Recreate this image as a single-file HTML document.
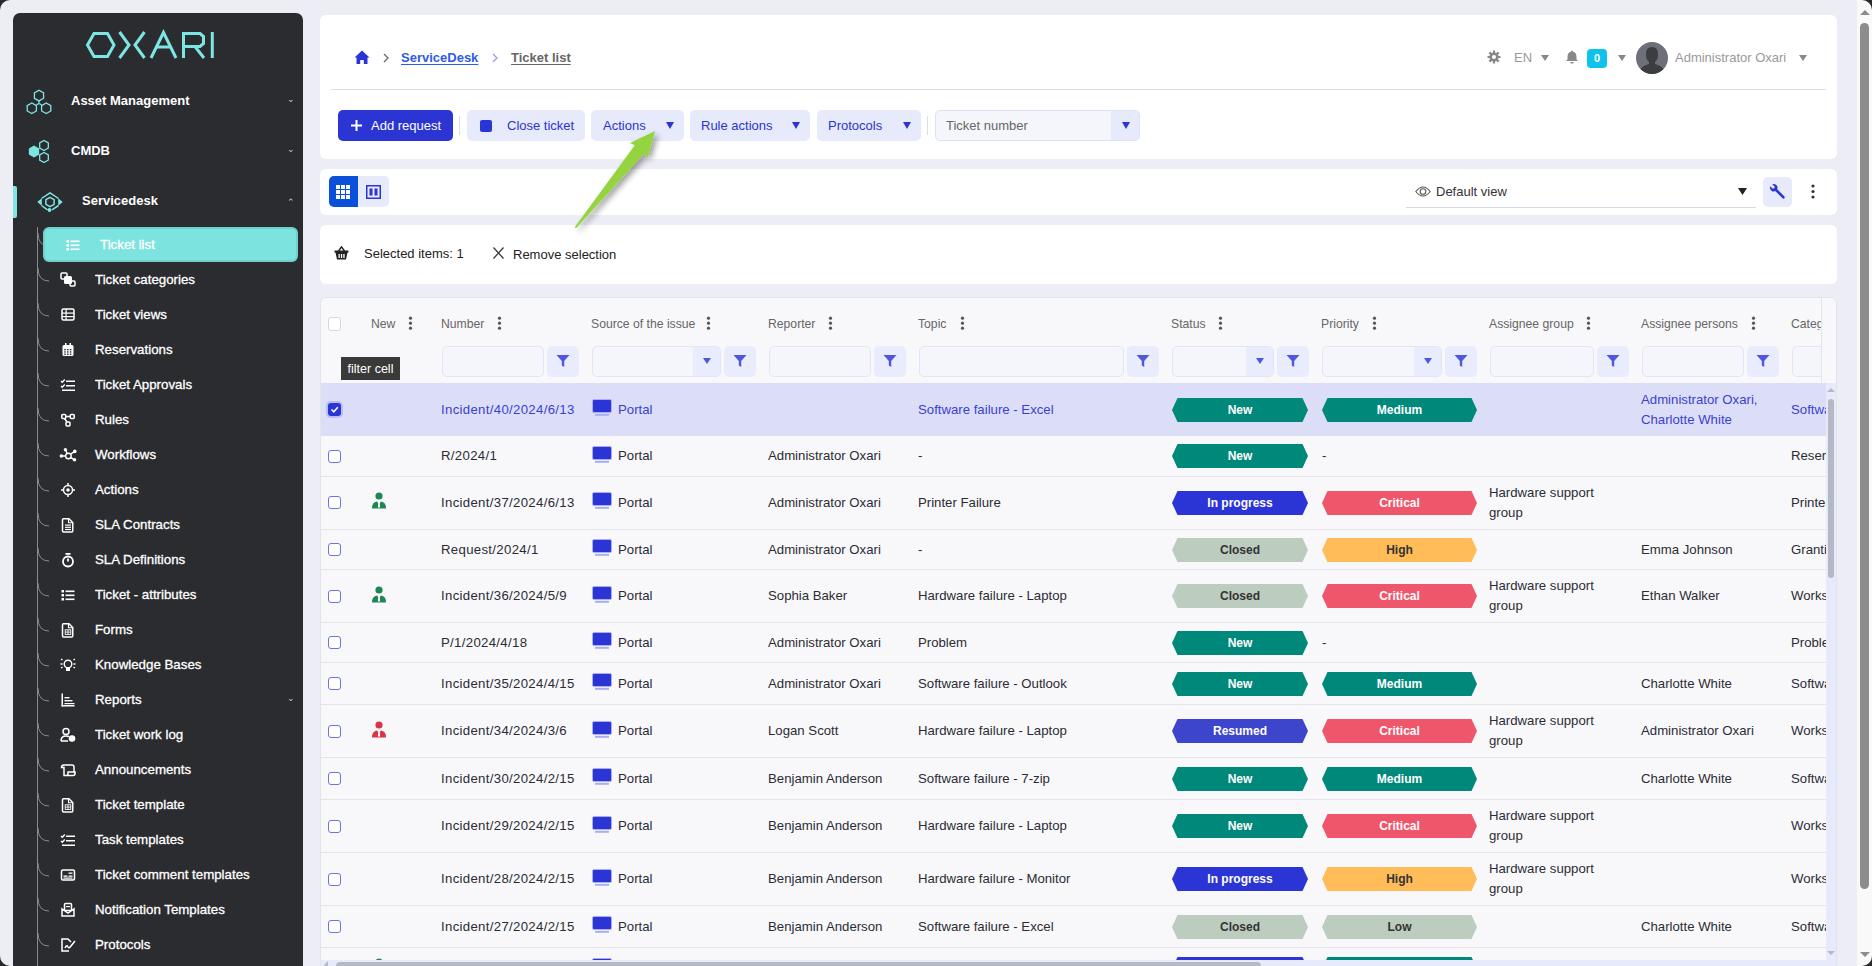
<!DOCTYPE html><html><head><meta charset="utf-8"><title>Ticket list</title><style>
*{box-sizing:border-box;margin:0;padding:0}
html,body{width:1872px;height:966px;overflow:hidden;background:#EDEDF5;font-family:"Liberation Sans",sans-serif;color:#333}
.abs{position:absolute}
.t{position:absolute;white-space:nowrap;line-height:1}
svg{display:block}
</style></head><body><div class="abs" style="left:13px;top:13px;width:290px;height:980px;background:#2B2C2F;border-radius:7px"></div><svg class="abs" style="left:80px;top:25px" width="140" height="40" viewBox="80 25 140 40">
<g fill="none" stroke="#7DE6E2" stroke-width="3" stroke-linejoin="miter">
<polygon points="94,33.5 107.5,33.5 114,45 107.5,56.5 94,56.5 87.5,45"/>
<polyline points="119.5,32 129,45 119.5,58"/>
<polyline points="144.5,32 135,45 144.5,58"/>
<polyline points="151,58 163.5,32.5 176,58"/>
<line x1="156" y1="47" x2="171" y2="47"/>
<polyline points="183.5,58 183.5,33.5 200,33.5 203.5,36.5 203.5,43.5 200,46.5 183.5,46.5"/>
<line x1="195" y1="46.5" x2="204" y2="58"/>
<line x1="212.3" y1="32" x2="212.3" y2="58"/>
</g></svg><svg class="abs" style="left:24px;top:86px" width="30" height="30" viewBox="24 86 30 30"><g fill="none" stroke="#7DE6E2" stroke-width="1.3">
<polygon points="43.59,98.25 39.00,100.90 34.41,98.25 34.41,92.95 39.00,90.30 43.59,92.95"/><polygon points="36.39,110.95 31.80,113.60 27.21,110.95 27.21,105.65 31.80,103.00 36.39,105.65"/><polygon points="50.79,110.95 46.20,113.60 41.61,110.95 41.61,105.65 46.20,103.00 50.79,105.65"/><path d="M39 101 V103.5 M36.4 104.8 L39 103.5 L41.6 104.8"/></g></svg><div class="t" style="left:71px;top:94px;font-size:13px;font-weight:bold;color:#fff">Asset Management</div><div class="t" style="left:287px;top:95px;font-size:9px;color:#ccc">&#8964;</div><svg class="abs" style="left:24px;top:136px" width="30" height="30" viewBox="24 136 30 30"><g fill="none" stroke="#7DE6E2" stroke-width="1.3">
<polygon points="38.50,154.10 34.00,156.70 29.50,154.10 29.50,148.90 34.00,146.30 38.50,148.90" fill="#7DE6E2"/><polygon points="48.33,148.00 44.00,150.50 39.67,148.00 39.67,143.00 44.00,140.50 48.33,143.00"/><polygon points="48.33,160.00 44.00,162.50 39.67,160.00 39.67,155.00 44.00,152.50 48.33,155.00"/></g></svg><div class="t" style="left:71px;top:144px;font-size:13px;font-weight:bold;color:#fff">CMDB</div><div class="t" style="left:287px;top:145px;font-size:9px;color:#ccc">&#8964;</div><div class="abs" style="left:13px;top:186px;width:4px;height:32px;background:#7DE6E2;border-radius:0 2px 2px 0"></div><svg class="abs" style="left:36px;top:189px" width="28" height="26" viewBox="36 189 28 26"><g fill="none" stroke="#7DE6E2" stroke-width="1.5" stroke-linejoin="round">
<polygon points="50,197.3 54.1,199.7 54.1,204.3 50,206.7 45.9,204.3 45.9,199.7"/>
<polyline points="41.5,198.5 50,192.8 58.5,198.5"/><polyline points="41.5,205.5 47.5,209.8"/><polyline points="52,209.8 58.5,205.5"/></g>
<polygon points="37.3,202 41.8,198.2 41.8,205.8" fill="#7DE6E2"/><polygon points="62.7,202 58.2,198.2 58.2,205.8" fill="#7DE6E2"/><circle cx="49.5" cy="210" r="1.9" fill="#7DE6E2"/></svg><div class="t" style="left:82px;top:194px;font-size:13px;font-weight:bold;color:#fff">Servicedesk</div><div class="t" style="left:287px;top:198px;font-size:9px;color:#ccc">&#8963;</div><div class="abs" style="left:37px;top:227px;width:1px;height:760px;background:#8A8B8E"></div><svg class="abs" style="left:0;top:0" width="303" height="966"><g fill="none" stroke="#8A8B8E" stroke-width="1"><path d="M38 233 Q38 246 49 246"/><path d="M38 268 Q38 281 49 281"/><path d="M38 303 Q38 316 49 316"/><path d="M38 338 Q38 351 49 351"/><path d="M38 373 Q38 386 49 386"/><path d="M38 408 Q38 421 49 421"/><path d="M38 443 Q38 456 49 456"/><path d="M38 478 Q38 491 49 491"/><path d="M38 513 Q38 526 49 526"/><path d="M38 548 Q38 561 49 561"/><path d="M38 583 Q38 596 49 596"/><path d="M38 618 Q38 631 49 631"/><path d="M38 653 Q38 666 49 666"/><path d="M38 688 Q38 701 49 701"/><path d="M38 723 Q38 736 49 736"/><path d="M38 758 Q38 771 49 771"/><path d="M38 793 Q38 806 49 806"/><path d="M38 828 Q38 841 49 841"/><path d="M38 863 Q38 876 49 876"/><path d="M38 898 Q38 911 49 911"/><path d="M38 933 Q38 946 49 946"/></g></svg><div class="abs" style="left:43px;top:227px;width:255px;height:35px;background:#7DE3DF;border:2px solid #6FD0CC;border-radius:6px"></div><svg class="abs" style="left:0;top:0" width="303" height="966"><g fill="#fff"><rect x="66.5" y="240" width="2.5" height="2.5"/><rect x="70.5" y="240.5" width="9" height="1.6"/><rect x="66.5" y="244" width="2.5" height="2.5"/><rect x="70.5" y="244.5" width="9" height="1.6"/><rect x="66.5" y="248" width="2.5" height="2.5"/><rect x="70.5" y="248.5" width="9" height="1.6"/><rect x="61" y="273" width="6" height="6" rx="1" fill="none" stroke="#fff" stroke-width="1.5"/><rect x="64" y="276" width="8" height="8" rx="1.5"/><rect x="70" y="281" width="5" height="5" rx="1" fill="none" stroke="#fff" stroke-width="1.5"/><rect x="62" y="309" width="12" height="11" rx="1.5" fill="none" stroke="#fff" stroke-width="1.5"/><rect x="62" y="312.5" width="12" height="1.2"/><rect x="62" y="316" width="12" height="1.2"/><rect x="65.5" y="309" width="1.2" height="11"/><rect x="62.5" y="345" width="11" height="11" rx="1.5"/><rect x="65" y="343" width="1.5" height="3"/><rect x="69.5" y="343" width="1.5" height="3"/><rect x="64.2" y="349.0" width="1.6" height="1.3" fill="#2B2C2F"/><rect x="64.2" y="351.3" width="1.6" height="1.3" fill="#2B2C2F"/><rect x="64.2" y="353.6" width="1.6" height="1.3" fill="#2B2C2F"/><rect x="67.0" y="349.0" width="1.6" height="1.3" fill="#2B2C2F"/><rect x="67.0" y="351.3" width="1.6" height="1.3" fill="#2B2C2F"/><rect x="67.0" y="353.6" width="1.6" height="1.3" fill="#2B2C2F"/><rect x="69.8" y="349.0" width="1.6" height="1.3" fill="#2B2C2F"/><rect x="69.8" y="351.3" width="1.6" height="1.3" fill="#2B2C2F"/><rect x="69.8" y="353.6" width="1.6" height="1.3" fill="#2B2C2F"/><path d="M61 381 l1.3 1.3 l2.5 -2.8" fill="none" stroke="#fff" stroke-width="1.3"/><path d="M61 386 l1.3 1.3 l2.5 -2.8" fill="none" stroke="#fff" stroke-width="1.3"/><rect x="66" y="380.5" width="9" height="1.5"/><rect x="66" y="385" width="9" height="1.5"/><rect x="62" y="389.5" width="13" height="1.5"/><g fill="none" stroke="#fff" stroke-width="1.5"><rect x="61.75" y="414.5" width="4" height="4" rx="1"/><rect x="70.25" y="414.5" width="4" height="4" rx="1"/><rect x="66" y="422" width="4" height="4" rx="1"/><path d="M65.75 416.5 h4.5 M64.5 418.5 l2.5 3.5"/></g><g fill="none" stroke="#fff" stroke-width="1.4"><circle cx="68.4" cy="456" r="2.8"/><path d="M61.4 456 h4.2 M65.4 449.7 l1.7 3.6 M74.8 451.4 l-4.2 2.8 M74.5 459.8 l-4 -2.4"/></g><circle cx="61.4" cy="456" r="1.8"/><circle cx="65.4" cy="449.7" r="1.7"/><circle cx="74.8" cy="451.4" r="1.8"/><circle cx="74.5" cy="459.8" r="1.8"/><g fill="none" stroke="#fff" stroke-width="1.5"><circle cx="68" cy="490" r="4.5"/><path d="M68 483 v3 M68 494 v3 M61 490 h3 M72 490 h3"/></g><circle cx="68" cy="490" r="1.8"/><path d="M63.5 518.75 h5.5 l3.75 3.75 v8.5 q0 1 -1 1 h-8.25 q-1 0 -1 -1 v-11.25 q0 -1 1 -1z" fill="none" stroke="#fff" stroke-width="1.5"/><rect x="65" y="524.5" width="6" height="1.2"/><rect x="65" y="526.7" width="6" height="1.2"/><rect x="65" y="528.9" width="6" height="1.2"/><path d="M68.5 518.75 v4 h4" fill="none" stroke="#fff" stroke-width="1.2"/><g fill="none" stroke="#fff" stroke-width="1.8"><circle cx="68" cy="561.5" r="5"/><path d="M68 561.5 v-3"/></g><rect x="65.5" y="553" width="5" height="1.8"/><rect x="61.5" y="590" width="2.5" height="2.5"/><rect x="65.5" y="590.5" width="9" height="1.6"/><rect x="61.5" y="594" width="2.5" height="2.5"/><rect x="65.5" y="594.5" width="9" height="1.6"/><rect x="61.5" y="598" width="2.5" height="2.5"/><rect x="65.5" y="598.5" width="9" height="1.6"/><path d="M63.5 623.75 h5.5 l3.75 3.75 v8.5 q0 1 -1 1 h-8.25 q-1 0 -1 -1 v-11.25 q0 -1 1 -1z" fill="none" stroke="#fff" stroke-width="1.5"/><path d="M68.5 623.75 v4 h4" fill="none" stroke="#fff" stroke-width="1.2"/><g fill="none" stroke="#fff" stroke-width="0.9"><rect x="65.2" y="629.8" width="5.6" height="4.6"/><path d="M68 629.8 v4.6 M65.2 632.1 h5.6"/></g><g fill="none" stroke="#fff" stroke-width="1.4"><circle cx="68" cy="664" r="3.8"/><path d="M61 659 l1.5 1 M75 659 l-1.5 1 M60.5 664 h2 M73.5 664 h2 M61 668 l1.5 -1 M75 668 l-1.5 -1"/></g><rect x="66" y="668" width="4" height="3"/><rect x="61.5" y="693.5" width="1.5" height="13"/><rect x="61.5" y="705" width="13" height="1.5"/><rect x="64.5" y="697" width="5" height="1.4"/><rect x="64.5" y="700" width="8" height="1.4"/><rect x="64.5" y="703" width="10" height="1.2"/><g fill="none" stroke="#fff" stroke-width="1.5"><circle cx="66" cy="731.5" r="3"/><path d="M61 741 q0 -5 5 -5 q2 0 3 .5 M61 741 h7"/></g><circle cx="72" cy="738.5" r="3.3"/><g fill="none" stroke="#fff" stroke-width="1.5"><path d="M64 765 h8 q2 0 2 2 v6 M64 765 q-2.5 0 -2.5 2.5 h2.5 v8 h9 q2 0 2 -2 v-1.5 h-7 v1.5 q0 2 -2 2"/></g><path d="M63.5 798.75 h5.5 l3.75 3.75 v8.5 q0 1 -1 1 h-8.25 q-1 0 -1 -1 v-11.25 q0 -1 1 -1z" fill="none" stroke="#fff" stroke-width="1.5"/><path d="M68.5 798.75 v4 h4" fill="none" stroke="#fff" stroke-width="1.2"/><g fill="none" stroke="#fff" stroke-width="0.9"><rect x="65.2" y="804.8" width="5.6" height="4.6"/><path d="M68 804.8 v4.6 M65.2 807.1 h5.6"/></g><path d="M61 836 l1.3 1.3 l2.5 -2.8" fill="none" stroke="#fff" stroke-width="1.3"/><path d="M61 841 l1.3 1.3 l2.5 -2.8" fill="none" stroke="#fff" stroke-width="1.3"/><rect x="66" y="835.5" width="9" height="1.5"/><rect x="66" y="840" width="9" height="1.5"/><rect x="62" y="844.5" width="13" height="1.5"/><rect x="61.5" y="870" width="13" height="10" rx="1.5" fill="none" stroke="#fff" stroke-width="1.5"/><rect x="63.5" y="875.5" width="4" height="1.3"/><rect x="68.5" y="875.5" width="4" height="1.3"/><rect x="63.5" y="877.5" width="9" height="1.2"/><rect x="68.5" y="872.5" width="4" height="1.3"/><g fill="none" stroke="#fff" stroke-width="1.5"><path d="M62 909 v7 h12 v-7 l-6 4 z"/><rect x="64.5" y="903.5" width="7" height="7" rx="1"/></g><rect x="66" y="906" width="4" height="1.2"/><g fill="none" stroke="#fff" stroke-width="1.5"><path d="M69 951 h-7 v-12 h6 l3 3"/></g><path d="M65 948 q2 -4 3 -1 q1 2 3 -1 l4 -5" fill="none" stroke="#fff" stroke-width="1.5"/></g></svg><div class="t" style="left:100px;top:238px;font-size:13.3px;color:#fff;-webkit-text-stroke:0.3px #fff">Ticket list</div><div class="t" style="left:95px;top:273px;font-size:13.3px;color:#fff;-webkit-text-stroke:0.3px #fff">Ticket categories</div><div class="t" style="left:95px;top:308px;font-size:13.3px;color:#fff;-webkit-text-stroke:0.3px #fff">Ticket views</div><div class="t" style="left:95px;top:343px;font-size:13.3px;color:#fff;-webkit-text-stroke:0.3px #fff">Reservations</div><div class="t" style="left:95px;top:378px;font-size:13.3px;color:#fff;-webkit-text-stroke:0.3px #fff">Ticket Approvals</div><div class="t" style="left:95px;top:413px;font-size:13.3px;color:#fff;-webkit-text-stroke:0.3px #fff">Rules</div><div class="t" style="left:95px;top:448px;font-size:13.3px;color:#fff;-webkit-text-stroke:0.3px #fff">Workflows</div><div class="t" style="left:95px;top:483px;font-size:13.3px;color:#fff;-webkit-text-stroke:0.3px #fff">Actions</div><div class="t" style="left:95px;top:518px;font-size:13.3px;color:#fff;-webkit-text-stroke:0.3px #fff">SLA Contracts</div><div class="t" style="left:95px;top:553px;font-size:13.3px;color:#fff;-webkit-text-stroke:0.3px #fff">SLA Definitions</div><div class="t" style="left:95px;top:588px;font-size:13.3px;color:#fff;-webkit-text-stroke:0.3px #fff">Ticket - attributes</div><div class="t" style="left:95px;top:623px;font-size:13.3px;color:#fff;-webkit-text-stroke:0.3px #fff">Forms</div><div class="t" style="left:95px;top:658px;font-size:13.3px;color:#fff;-webkit-text-stroke:0.3px #fff">Knowledge Bases</div><div class="t" style="left:95px;top:693px;font-size:13.3px;color:#fff;-webkit-text-stroke:0.3px #fff">Reports</div><div class="t" style="left:95px;top:728px;font-size:13.3px;color:#fff;-webkit-text-stroke:0.3px #fff">Ticket work log</div><div class="t" style="left:95px;top:763px;font-size:13.3px;color:#fff;-webkit-text-stroke:0.3px #fff">Announcements</div><div class="t" style="left:95px;top:798px;font-size:13.3px;color:#fff;-webkit-text-stroke:0.3px #fff">Ticket template</div><div class="t" style="left:95px;top:833px;font-size:13.3px;color:#fff;-webkit-text-stroke:0.3px #fff">Task templates</div><div class="t" style="left:95px;top:868px;font-size:13.3px;color:#fff;-webkit-text-stroke:0.3px #fff">Ticket comment templates</div><div class="t" style="left:95px;top:903px;font-size:13.3px;color:#fff;-webkit-text-stroke:0.3px #fff">Notification Templates</div><div class="t" style="left:95px;top:938px;font-size:13.3px;color:#fff;-webkit-text-stroke:0.3px #fff">Protocols</div><div class="t" style="left:287px;top:694px;font-size:9px;color:#ccc">&#8964;</div><div class="abs" style="left:320px;top:15px;width:1517px;height:144px;background:#fff;border-radius:6px"></div><div class="abs" style="left:320px;top:169px;width:1517px;height:46px;background:#fff;border-radius:6px"></div><div class="abs" style="left:320px;top:225px;width:1517px;height:59px;background:#fff;border-radius:6px"></div><svg class="abs" style="left:354px;top:50px" width="16" height="15" viewBox="0 0 16 15"><path d="M8 0.5 L15.5 7.5 L13.5 7.5 L13.5 14 L9.8 14 L9.8 10 L6.2 10 L6.2 14 L2.5 14 L2.5 7.5 L0.5 7.5 Z" fill="#2B35D3"/></svg><svg class="abs" style="left:382px;top:53px" width="8" height="10"><path d="M2 1 L6 5 L2 9" fill="none" stroke="#666" stroke-width="1.3"/></svg><div class="t" style="left:401px;top:51px;font-size:13px;font-weight:bold;color:#2F5BE6;text-decoration:underline;text-underline-offset:2px">ServiceDesk</div><svg class="abs" style="left:491px;top:53px" width="8" height="10"><path d="M2 1 L6 5 L2 9" fill="none" stroke="#9A9BE6" stroke-width="1.3"/></svg><div class="t" style="left:511px;top:51px;font-size:13px;font-weight:bold;color:#666;text-decoration:underline;text-underline-offset:2px">Ticket list</div><svg class="abs" style="left:1487px;top:50px" width="14" height="14" viewBox="0 0 14 14"><g fill="#888"><circle cx="7" cy="7" r="4.6"/><g stroke="#888" stroke-width="2.2"><path d="M7 0.5v13M0.5 7h13M2.4 2.4l9.2 9.2M11.6 2.4l-9.2 9.2"/></g></g><circle cx="7" cy="7" r="2" fill="#fff"/></svg><div class="t" style="left:1514px;top:51px;font-size:13px;color:#999">EN</div><svg class="abs" style="left:1541px;top:55px" width="8" height="6"><path d="M0 0 L8 0 L4.0 6 Z" fill="#888"/></svg><svg class="abs" style="left:1566px;top:50px" width="12" height="14" viewBox="0 0 12 14"><path d="M6 0.5 Q6.8 0.5 6.8 1.6 Q10.5 2.5 10.5 7 L10.5 9.5 L12 11 L0 11 L1.5 9.5 L1.5 7 Q1.5 2.5 5.2 1.6 Q5.2 0.5 6 0.5Z M4.3 12 h3.4 Q7.5 13.8 6 13.8 Q4.5 13.8 4.3 12Z" fill="#888"/></svg><div class="abs" style="left:1587px;top:49px;width:20px;height:19px;background:#0DC3EC;border-radius:4px;color:#fff;font-size:11px;font-weight:bold;text-align:center;line-height:19px">0</div><svg class="abs" style="left:1618px;top:55px" width="8" height="6"><path d="M0 0 L8 0 L4.0 6 Z" fill="#888"/></svg><svg class="abs" style="left:1636px;top:42px" width="32" height="32" viewBox="0 0 32 32"><defs><clipPath id="av"><circle cx="16" cy="16" r="16"/></clipPath></defs><g clip-path="url(#av)"><rect width="32" height="32" fill="#6D7078"/><path d="M16 5 Q22 5 22 12 Q22 18 19 20 L19 22 Q27 24 29 30 L29 32 L3 32 L3 30 Q5 24 13 22 L13 20 Q10 18 10 12 Q10 5 16 5Z" fill="#3C3D40"/></g></svg><div class="t" style="left:1675px;top:51px;font-size:13px;color:#999">Administrator Oxari</div><svg class="abs" style="left:1799px;top:55px" width="8" height="6"><path d="M0 0 L8 0 L4.0 6 Z" fill="#888"/></svg><div class="abs" style="left:331px;top:89px;width:1495px;height:1px;background:#D8DCE8"></div><div class="abs" style="left:338px;top:110px;width:115px;height:31px;background:#2B35D3;border-radius:5px"></div><svg class="abs" style="left:351px;top:120px" width="11" height="11"><path d="M5.5 0v11M0 5.5h11" stroke="#fff" stroke-width="2"/></svg><div class="t" style="left:371px;top:119px;font-size:13px;color:#fff">Add request</div><div class="abs" style="left:459px;top:116px;width:1px;height:19px;background:#DDDDE3"></div><div class="abs" style="left:467px;top:110px;width:118px;height:31px;background:#E6EAFB;border-radius:5px"></div><div class="abs" style="left:480px;top:120px;width:12px;height:12px;background:#2B35D3;border-radius:2px"></div><div class="t" style="left:507px;top:119px;font-size:13px;color:#2B35D3">Close ticket</div><div class="abs" style="left:591px;top:110px;width:93px;height:31px;background:#E6EAFB;border-radius:5px"></div><div class="t" style="left:603px;top:119px;font-size:13px;color:#2B35D3">Actions</div><svg class="abs" style="left:666px;top:122px" width="8" height="7"><path d="M0 0 L8 0 L4.0 7 Z" fill="#2B35D3"/></svg><div class="abs" style="left:690px;top:110px;width:120px;height:31px;background:#E6EAFB;border-radius:5px"></div><div class="t" style="left:701px;top:119px;font-size:13px;color:#2B35D3">Rule actions</div><svg class="abs" style="left:792px;top:122px" width="8" height="7"><path d="M0 0 L8 0 L4.0 7 Z" fill="#2B35D3"/></svg><div class="abs" style="left:817px;top:110px;width:104px;height:31px;background:#E6EAFB;border-radius:5px"></div><div class="t" style="left:828px;top:119px;font-size:13px;color:#2B35D3">Protocols</div><svg class="abs" style="left:903px;top:122px" width="8" height="7"><path d="M0 0 L8 0 L4.0 7 Z" fill="#2B35D3"/></svg><div class="abs" style="left:927px;top:116px;width:1px;height:19px;background:#DDDDE3"></div><div class="abs" style="left:935px;top:110px;width:205px;height:31px;background:#F5F6FB;border:1px solid #DCE2F6;border-radius:5px;overflow:hidden"><div class="abs" style="right:0;top:0;width:28px;height:29px;background:#E6EAFB"></div></div><div class="t" style="left:946px;top:119px;font-size:13px;color:#666">Ticket number</div><svg class="abs" style="left:1122px;top:122px" width="8" height="7"><path d="M0 0 L8 0 L4.0 7 Z" fill="#2B35D3"/></svg><div class="abs" style="left:329px;top:176px;width:60px;height:31px;background:#E6EAFB;border-radius:5px"></div><div class="abs" style="left:329px;top:176px;width:29px;height:31px;background:#0B50D8;border-radius:5px 0 0 5px"></div><svg class="abs" style="left:336px;top:185px" width="14" height="14"><g fill="#fff"><rect x="0" y="0" width="4" height="4"/><rect x="0" y="5" width="4" height="4"/><rect x="0" y="10" width="4" height="4"/><rect x="5" y="0" width="4" height="4"/><rect x="5" y="5" width="4" height="4"/><rect x="5" y="10" width="4" height="4"/><rect x="10" y="0" width="4" height="4"/><rect x="10" y="5" width="4" height="4"/><rect x="10" y="10" width="4" height="4"/></g></svg><svg class="abs" style="left:366px;top:185px" width="15" height="14"><rect x="0.75" y="0.75" width="13.5" height="12.5" fill="none" stroke="#2B35D3" stroke-width="1.5"/><rect x="3.5" y="3.5" width="3" height="7" fill="#2B35D3"/><rect x="8.5" y="3.5" width="3" height="7" fill="#2B35D3"/></svg><svg class="abs" style="left:1415px;top:185px" width="16" height="13" viewBox="0 0 16 13"><path d="M0.8 6.5 Q8 -2.5 15.2 6.5 Q8 15.5 0.8 6.5Z" fill="none" stroke="#555" stroke-width="1.1"/><circle cx="8" cy="6.5" r="2.8" fill="none" stroke="#555" stroke-width="1.1"/></svg><div class="t" style="left:1436px;top:185px;font-size:13px;color:#333">Default view</div><svg class="abs" style="left:1738px;top:188px" width="9" height="7"><path d="M0 0 L9 0 L4.5 7 Z" fill="#222"/></svg><div class="abs" style="left:1406px;top:207px;width:350px;height:1px;background:#D5D9E6"></div><div class="abs" style="left:1763px;top:177px;width:29px;height:30px;background:#E6EAFB;border-radius:5px"></div><svg class="abs" style="left:1769px;top:183px" width="17" height="17" viewBox="0 0 17 17"><path d="M3.2 1.2 L5.8 3.8 L5.3 5.3 L3.8 5.8 L1.2 3.2 Q0.3 6.5 2.8 7.9 Q4.5 8.8 6.3 8.1 L13.3 15.1 Q14.5 16.2 15.4 15.3 Q16.3 14.4 15.2 13.2 L8.2 6.3 Q8.9 4.5 8 2.8 Q6.5 0.3 3.2 1.2Z" fill="#2B35D3"/></svg><svg class="abs" style="left:1811px;top:184px" width="4" height="15"><g fill="#333"><circle cx="2" cy="2" r="1.6"/><circle cx="2" cy="7.5" r="1.6"/><circle cx="2" cy="13" r="1.6"/></g></svg><svg class="abs" style="left:334px;top:246px" width="15" height="14" viewBox="0 0 15 14"><path d="M4.5 5 L7.5 0.8 L10.5 5" fill="none" stroke="#222" stroke-width="1.4"/><path d="M0.5 4.5 H14.5 V6.5 H0.5Z M1.5 6.5 H13.5 L12 13.5 H3Z" fill="#222"/><g fill="#fff"><rect x="4.5" y="8" width="1.3" height="4"/><rect x="6.9" y="8" width="1.3" height="4"/><rect x="9.3" y="8" width="1.3" height="4"/></g></svg><div class="t" style="left:364px;top:247px;font-size:13px;color:#222">Selected items: 1</div><svg class="abs" style="left:493px;top:247px" width="11" height="12"><path d="M0.5 0.5 L10.5 11.5 M10.5 0.5 L0.5 11.5" stroke="#333" stroke-width="1.2"/></svg><div class="t" style="left:513px;top:248px;font-size:13px;color:#222">Remove selection</div><div class="abs" style="left:320px;top:297px;width:1517px;height:700px;background:#F8F8FB;border:1px solid #E2E4EC;border-radius:6px"></div><div class="abs" style="left:328px;top:317px;width:13px;height:14px;background:#fff;border:1px solid #D6D8E0;border-radius:3px"></div><div class="t" style="left:371px;top:318px;font-size:12.2px;color:#666">New</div><svg class="abs" style="left:408px;top:316px" width="5" height="15"><g fill="#555"><circle cx="2.5" cy="2.2" r="1.6"/><circle cx="2.5" cy="7.2" r="1.6"/><circle cx="2.5" cy="12.2" r="1.6"/></g></svg><div class="t" style="left:441px;top:318px;font-size:12.2px;color:#666">Number</div><svg class="abs" style="left:497px;top:316px" width="5" height="15"><g fill="#555"><circle cx="2.5" cy="2.2" r="1.6"/><circle cx="2.5" cy="7.2" r="1.6"/><circle cx="2.5" cy="12.2" r="1.6"/></g></svg><div class="t" style="left:591px;top:318px;font-size:12.2px;color:#666">Source of the issue</div><svg class="abs" style="left:706px;top:316px" width="5" height="15"><g fill="#555"><circle cx="2.5" cy="2.2" r="1.6"/><circle cx="2.5" cy="7.2" r="1.6"/><circle cx="2.5" cy="12.2" r="1.6"/></g></svg><div class="t" style="left:768px;top:318px;font-size:12.2px;color:#666">Reporter</div><svg class="abs" style="left:828px;top:316px" width="5" height="15"><g fill="#555"><circle cx="2.5" cy="2.2" r="1.6"/><circle cx="2.5" cy="7.2" r="1.6"/><circle cx="2.5" cy="12.2" r="1.6"/></g></svg><div class="t" style="left:918px;top:318px;font-size:12.2px;color:#666">Topic</div><svg class="abs" style="left:960px;top:316px" width="5" height="15"><g fill="#555"><circle cx="2.5" cy="2.2" r="1.6"/><circle cx="2.5" cy="7.2" r="1.6"/><circle cx="2.5" cy="12.2" r="1.6"/></g></svg><div class="t" style="left:1171px;top:318px;font-size:12.2px;color:#666">Status</div><svg class="abs" style="left:1218px;top:316px" width="5" height="15"><g fill="#555"><circle cx="2.5" cy="2.2" r="1.6"/><circle cx="2.5" cy="7.2" r="1.6"/><circle cx="2.5" cy="12.2" r="1.6"/></g></svg><div class="t" style="left:1321px;top:318px;font-size:12.2px;color:#666">Priority</div><svg class="abs" style="left:1372px;top:316px" width="5" height="15"><g fill="#555"><circle cx="2.5" cy="2.2" r="1.6"/><circle cx="2.5" cy="7.2" r="1.6"/><circle cx="2.5" cy="12.2" r="1.6"/></g></svg><div class="t" style="left:1489px;top:318px;font-size:12.2px;color:#666">Assignee group</div><svg class="abs" style="left:1586px;top:316px" width="5" height="15"><g fill="#555"><circle cx="2.5" cy="2.2" r="1.6"/><circle cx="2.5" cy="7.2" r="1.6"/><circle cx="2.5" cy="12.2" r="1.6"/></g></svg><div class="t" style="left:1641px;top:318px;font-size:12.2px;color:#666">Assignee persons</div><svg class="abs" style="left:1751px;top:316px" width="5" height="15"><g fill="#555"><circle cx="2.5" cy="2.2" r="1.6"/><circle cx="2.5" cy="7.2" r="1.6"/><circle cx="2.5" cy="12.2" r="1.6"/></g></svg><div class="abs" style="left:1791px;top:310px;width:30px;height:20px;overflow:hidden"><div class="t" style="left:0;top:8px;font-size:12.2px;color:#666">Category</div></div><div class="abs" style="left:1821px;top:298px;width:1px;height:85px;background:#E3E5EC"></div><div class="abs" style="left:442px;top:346px;width:102px;height:31px;background:#F5F6FB;border:1px solid #E1E5F7;border-radius:5px"></div><div class="abs" style="left:547px;top:346px;width:32px;height:31px;background:#E8ECFC;border-radius:5px"></div><svg class="abs" style="left:556.0px;top:354px" width="14" height="14" viewBox="0 0 14 14"><path d="M0.5 1 H13.5 L8.2 7 V13 L5.8 11.5 V7 Z" fill="#4F57DD"/></svg><div class="abs" style="left:592px;top:346px;width:129px;height:31px;background:#F5F6FB;border:1px solid #E1E5F7;border-radius:5px;overflow:hidden"><div class="abs" style="left:100px;top:0;width:28px;height:31px;background:#E8ECFC"></div></div><svg class="abs" style="left:703.0px;top:358px" width="8" height="6"><path d="M0 0 L8 0 L4 6Z" fill="#4F57DD"/></svg><div class="abs" style="left:724px;top:346px;width:32px;height:31px;background:#E8ECFC;border-radius:5px"></div><svg class="abs" style="left:733.0px;top:354px" width="14" height="14" viewBox="0 0 14 14"><path d="M0.5 1 H13.5 L8.2 7 V13 L5.8 11.5 V7 Z" fill="#4F57DD"/></svg><div class="abs" style="left:769px;top:346px;width:102px;height:31px;background:#F5F6FB;border:1px solid #E1E5F7;border-radius:5px"></div><div class="abs" style="left:874px;top:346px;width:32px;height:31px;background:#E8ECFC;border-radius:5px"></div><svg class="abs" style="left:883.0px;top:354px" width="14" height="14" viewBox="0 0 14 14"><path d="M0.5 1 H13.5 L8.2 7 V13 L5.8 11.5 V7 Z" fill="#4F57DD"/></svg><div class="abs" style="left:919px;top:346px;width:205px;height:31px;background:#F5F6FB;border:1px solid #E1E5F7;border-radius:5px"></div><div class="abs" style="left:1127px;top:346px;width:32px;height:31px;background:#E8ECFC;border-radius:5px"></div><svg class="abs" style="left:1136.0px;top:354px" width="14" height="14" viewBox="0 0 14 14"><path d="M0.5 1 H13.5 L8.2 7 V13 L5.8 11.5 V7 Z" fill="#4F57DD"/></svg><div class="abs" style="left:1172px;top:346px;width:102px;height:31px;background:#F5F6FB;border:1px solid #E1E5F7;border-radius:5px;overflow:hidden"><div class="abs" style="left:73px;top:0;width:28px;height:31px;background:#E8ECFC"></div></div><svg class="abs" style="left:1256.0px;top:358px" width="8" height="6"><path d="M0 0 L8 0 L4 6Z" fill="#4F57DD"/></svg><div class="abs" style="left:1277px;top:346px;width:32px;height:31px;background:#E8ECFC;border-radius:5px"></div><svg class="abs" style="left:1286.0px;top:354px" width="14" height="14" viewBox="0 0 14 14"><path d="M0.5 1 H13.5 L8.2 7 V13 L5.8 11.5 V7 Z" fill="#4F57DD"/></svg><div class="abs" style="left:1322px;top:346px;width:120px;height:31px;background:#F5F6FB;border:1px solid #E1E5F7;border-radius:5px;overflow:hidden"><div class="abs" style="left:91px;top:0;width:28px;height:31px;background:#E8ECFC"></div></div><svg class="abs" style="left:1424.0px;top:358px" width="8" height="6"><path d="M0 0 L8 0 L4 6Z" fill="#4F57DD"/></svg><div class="abs" style="left:1445px;top:346px;width:32px;height:31px;background:#E8ECFC;border-radius:5px"></div><svg class="abs" style="left:1454.0px;top:354px" width="14" height="14" viewBox="0 0 14 14"><path d="M0.5 1 H13.5 L8.2 7 V13 L5.8 11.5 V7 Z" fill="#4F57DD"/></svg><div class="abs" style="left:1490px;top:346px;width:104px;height:31px;background:#F5F6FB;border:1px solid #E1E5F7;border-radius:5px"></div><div class="abs" style="left:1597px;top:346px;width:32px;height:31px;background:#E8ECFC;border-radius:5px"></div><svg class="abs" style="left:1606.0px;top:354px" width="14" height="14" viewBox="0 0 14 14"><path d="M0.5 1 H13.5 L8.2 7 V13 L5.8 11.5 V7 Z" fill="#4F57DD"/></svg><div class="abs" style="left:1642px;top:346px;width:102px;height:31px;background:#F5F6FB;border:1px solid #E1E5F7;border-radius:5px"></div><div class="abs" style="left:1747px;top:346px;width:32px;height:31px;background:#E8ECFC;border-radius:5px"></div><svg class="abs" style="left:1756.0px;top:354px" width="14" height="14" viewBox="0 0 14 14"><path d="M0.5 1 H13.5 L8.2 7 V13 L5.8 11.5 V7 Z" fill="#4F57DD"/></svg><div class="abs" style="left:1792px;top:346px;width:29px;height:31px;overflow:hidden"><div class="abs" style="left:0;top:0;width:60px;height:31px;background:#F5F6FB;border:1px solid #E1E5F7;border-radius:5px"></div></div><div class="abs" style="left:0;top:383px;width:1826px;height:577px;overflow:hidden"><div class="abs" style="left:0;top:-383px;width:1826px;height:1400px"><div class="abs" style="left:321px;top:383px;width:1505px;height:53px;background:#DCDEF8"></div><div class="abs" style="left:326px;top:400.5px;width:17px;height:17px;background:#B9BDF4;border-radius:5px"></div><div class="abs" style="left:328px;top:402.5px;width:13px;height:13px;background:#2B35D5;border-radius:3px"></div><svg class="abs" style="left:330px;top:404.5px" width="9" height="9"><path d="M1.5 4.5 L3.8 6.8 L7.8 2.2" fill="none" stroke="#fff" stroke-width="1.6"/></svg><div class="t" style="left:441px;top:402.5px;font-size:13.2px;letter-spacing:0.32px;color:#3B3FD0">Incident/40/2024/6/13</div><svg class="abs" style="left:592px;top:399.0px" width="20" height="17" viewBox="0 0 20 17"><rect x="0.5" y="0.5" width="19" height="13" rx="1.5" fill="#2B35D5" stroke="#A9ADF2" stroke-width="1"/><rect x="3" y="14.8" width="14" height="2" fill="#A9ADF2"/></svg><div class="t" style="left:618px;top:402.5px;font-size:13.2px;letter-spacing:0px;color:#3B3FD0">Portal</div><div class="t" style="left:918px;top:402.5px;font-size:13.2px;letter-spacing:0px;color:#3B3FD0">Software failure - Excel</div><svg class="abs" style="left:1172px;top:397.5px" width="136" height="24" viewBox="0 0 136 24"><path d="M0 12 L5.5 0 H130.5 L136 12 L130.5 24 H5.5 Z" fill="#00897B"/></svg><div class="t" style="left:1172px;top:403.5px;width:136px;text-align:center;font-size:12px;font-weight:bold;color:#fff">New</div><svg class="abs" style="left:1322px;top:397.5px" width="155" height="24" viewBox="0 0 155 24"><path d="M0 12 L5.5 0 H149.5 L155 12 L149.5 24 H5.5 Z" fill="#00897B"/></svg><div class="t" style="left:1322px;top:403.5px;width:155px;text-align:center;font-size:12px;font-weight:bold;color:#fff">Medium</div><div class="t" style="left:1641px;top:392.5px;font-size:13.2px;color:#3B3FD0">Administrator Oxari,</div><div class="t" style="left:1641px;top:412.5px;font-size:13.2px;color:#3B3FD0">Charlotte White</div><div class="abs" style="left:1791px;top:383px;width:35px;height:53px;overflow:hidden"><div class="t" style="left:0px;top:19.5px;font-size:13.2px;letter-spacing:0px;color:#3B3FD0">Software</div></div><div class="abs" style="left:321px;top:475.5px;width:1505px;height:1px;background:#E4E5EA"></div><div class="abs" style="left:328px;top:449.5px;width:13px;height:13px;background:#fff;border:1.3px solid #6B73E8;border-radius:3px"></div><div class="t" style="left:441px;top:449.0px;font-size:13.2px;letter-spacing:0.32px;color:#2B2C33">R/2024/1</div><svg class="abs" style="left:592px;top:445.5px" width="20" height="17" viewBox="0 0 20 17"><rect x="0.5" y="0.5" width="19" height="13" rx="1.5" fill="#2B35D5" stroke="#A9ADF2" stroke-width="1"/><rect x="3" y="14.8" width="14" height="2" fill="#A9ADF2"/></svg><div class="t" style="left:618px;top:449.0px;font-size:13.2px;letter-spacing:0px;color:#2B2C33">Portal</div><div class="t" style="left:768px;top:449.0px;font-size:13.2px;letter-spacing:0px;color:#2B2C33">Administrator Oxari</div><div class="t" style="left:918px;top:449.0px;font-size:13.2px;letter-spacing:0px;color:#2B2C33">-</div><svg class="abs" style="left:1172px;top:444.0px" width="136" height="24" viewBox="0 0 136 24"><path d="M0 12 L5.5 0 H130.5 L136 12 L130.5 24 H5.5 Z" fill="#00897B"/></svg><div class="t" style="left:1172px;top:450.0px;width:136px;text-align:center;font-size:12px;font-weight:bold;color:#fff">New</div><div class="t" style="left:1322px;top:449.0px;font-size:13.2px;letter-spacing:0px;color:#2B2C33">-</div><div class="abs" style="left:1791px;top:436px;width:35px;height:40px;overflow:hidden"><div class="t" style="left:0px;top:13.0px;font-size:13.2px;letter-spacing:0px;color:#2B2C33">Reserare</div></div><div class="abs" style="left:321px;top:529.0px;width:1505px;height:1px;background:#E4E5EA"></div><div class="abs" style="left:328px;top:496.25px;width:13px;height:13px;background:#fff;border:1.3px solid #6B73E8;border-radius:3px"></div><svg class="abs" style="left:370.5px;top:492.25px" width="16" height="17" viewBox="0 0 16 17"><circle cx="8" cy="4" r="3.6" fill="#1E8553"/><path d="M1 16.5 Q1 10 6 9.5 L8 12 L10 9.5 Q15 10 15 16.5Z" fill="#1E8553"/><path d="M7.3 10.5 h1.4 l0.4 5 h-2.2z" fill="#fff"/></svg><div class="t" style="left:441px;top:495.75px;font-size:13.2px;letter-spacing:0.32px;color:#2B2C33">Incident/37/2024/6/13</div><svg class="abs" style="left:592px;top:492.25px" width="20" height="17" viewBox="0 0 20 17"><rect x="0.5" y="0.5" width="19" height="13" rx="1.5" fill="#2B35D5" stroke="#A9ADF2" stroke-width="1"/><rect x="3" y="14.8" width="14" height="2" fill="#A9ADF2"/></svg><div class="t" style="left:618px;top:495.75px;font-size:13.2px;letter-spacing:0px;color:#2B2C33">Portal</div><div class="t" style="left:768px;top:495.75px;font-size:13.2px;letter-spacing:0px;color:#2B2C33">Administrator Oxari</div><div class="t" style="left:918px;top:495.75px;font-size:13.2px;letter-spacing:0px;color:#2B2C33">Printer Failure</div><svg class="abs" style="left:1172px;top:490.75px" width="136" height="24" viewBox="0 0 136 24"><path d="M0 12 L5.5 0 H130.5 L136 12 L130.5 24 H5.5 Z" fill="#2B35D5"/></svg><div class="t" style="left:1172px;top:496.75px;width:136px;text-align:center;font-size:12px;font-weight:bold;color:#fff">In progress</div><svg class="abs" style="left:1322px;top:490.75px" width="155" height="24" viewBox="0 0 155 24"><path d="M0 12 L5.5 0 H149.5 L155 12 L149.5 24 H5.5 Z" fill="#F0566B"/></svg><div class="t" style="left:1322px;top:496.75px;width:155px;text-align:center;font-size:12px;font-weight:bold;color:#fff">Critical</div><div class="t" style="left:1489px;top:485.75px;font-size:13.2px;color:#2B2C33">Hardware support</div><div class="t" style="left:1489px;top:505.75px;font-size:13.2px;color:#2B2C33">group</div><div class="abs" style="left:1791px;top:476px;width:35px;height:53.5px;overflow:hidden"><div class="t" style="left:0px;top:19.75px;font-size:13.2px;letter-spacing:0px;color:#2B2C33">Printeare</div></div><div class="abs" style="left:321px;top:569.0px;width:1505px;height:1px;background:#E4E5EA"></div><div class="abs" style="left:328px;top:543.0px;width:13px;height:13px;background:#fff;border:1.3px solid #6B73E8;border-radius:3px"></div><div class="t" style="left:441px;top:542.5px;font-size:13.2px;letter-spacing:0.32px;color:#2B2C33">Request/2024/1</div><svg class="abs" style="left:592px;top:539.0px" width="20" height="17" viewBox="0 0 20 17"><rect x="0.5" y="0.5" width="19" height="13" rx="1.5" fill="#2B35D5" stroke="#A9ADF2" stroke-width="1"/><rect x="3" y="14.8" width="14" height="2" fill="#A9ADF2"/></svg><div class="t" style="left:618px;top:542.5px;font-size:13.2px;letter-spacing:0px;color:#2B2C33">Portal</div><div class="t" style="left:768px;top:542.5px;font-size:13.2px;letter-spacing:0px;color:#2B2C33">Administrator Oxari</div><div class="t" style="left:918px;top:542.5px;font-size:13.2px;letter-spacing:0px;color:#2B2C33">-</div><svg class="abs" style="left:1172px;top:537.5px" width="136" height="24" viewBox="0 0 136 24"><path d="M0 12 L5.5 0 H130.5 L136 12 L130.5 24 H5.5 Z" fill="#BCCCBE"/></svg><div class="t" style="left:1172px;top:543.5px;width:136px;text-align:center;font-size:12px;font-weight:bold;color:#333">Closed</div><svg class="abs" style="left:1322px;top:537.5px" width="155" height="24" viewBox="0 0 155 24"><path d="M0 12 L5.5 0 H149.5 L155 12 L149.5 24 H5.5 Z" fill="#FFBC58"/></svg><div class="t" style="left:1322px;top:543.5px;width:155px;text-align:center;font-size:12px;font-weight:bold;color:#333">High</div><div class="t" style="left:1641px;top:542.5px;font-size:13.2px;letter-spacing:0px;color:#2B2C33">Emma Johnson</div><div class="abs" style="left:1791px;top:529.5px;width:35px;height:40.0px;overflow:hidden"><div class="t" style="left:0px;top:13.0px;font-size:13.2px;letter-spacing:0px;color:#2B2C33">Grantiare</div></div><div class="abs" style="left:321px;top:622.0px;width:1505px;height:1px;background:#E4E5EA"></div><div class="abs" style="left:328px;top:589.5px;width:13px;height:13px;background:#fff;border:1.3px solid #6B73E8;border-radius:3px"></div><svg class="abs" style="left:370.5px;top:585.5px" width="16" height="17" viewBox="0 0 16 17"><circle cx="8" cy="4" r="3.6" fill="#1E8553"/><path d="M1 16.5 Q1 10 6 9.5 L8 12 L10 9.5 Q15 10 15 16.5Z" fill="#1E8553"/><path d="M7.3 10.5 h1.4 l0.4 5 h-2.2z" fill="#fff"/></svg><div class="t" style="left:441px;top:589.0px;font-size:13.2px;letter-spacing:0.32px;color:#2B2C33">Incident/36/2024/5/9</div><svg class="abs" style="left:592px;top:585.5px" width="20" height="17" viewBox="0 0 20 17"><rect x="0.5" y="0.5" width="19" height="13" rx="1.5" fill="#2B35D5" stroke="#A9ADF2" stroke-width="1"/><rect x="3" y="14.8" width="14" height="2" fill="#A9ADF2"/></svg><div class="t" style="left:618px;top:589.0px;font-size:13.2px;letter-spacing:0px;color:#2B2C33">Portal</div><div class="t" style="left:768px;top:589.0px;font-size:13.2px;letter-spacing:0px;color:#2B2C33">Sophia Baker</div><div class="t" style="left:918px;top:589.0px;font-size:13.2px;letter-spacing:0px;color:#2B2C33">Hardware failure - Laptop</div><svg class="abs" style="left:1172px;top:584.0px" width="136" height="24" viewBox="0 0 136 24"><path d="M0 12 L5.5 0 H130.5 L136 12 L130.5 24 H5.5 Z" fill="#BCCCBE"/></svg><div class="t" style="left:1172px;top:590.0px;width:136px;text-align:center;font-size:12px;font-weight:bold;color:#333">Closed</div><svg class="abs" style="left:1322px;top:584.0px" width="155" height="24" viewBox="0 0 155 24"><path d="M0 12 L5.5 0 H149.5 L155 12 L149.5 24 H5.5 Z" fill="#F0566B"/></svg><div class="t" style="left:1322px;top:590.0px;width:155px;text-align:center;font-size:12px;font-weight:bold;color:#fff">Critical</div><div class="t" style="left:1489px;top:579.0px;font-size:13.2px;color:#2B2C33">Hardware support</div><div class="t" style="left:1489px;top:599.0px;font-size:13.2px;color:#2B2C33">group</div><div class="t" style="left:1641px;top:589.0px;font-size:13.2px;letter-spacing:0px;color:#2B2C33">Ethan Walker</div><div class="abs" style="left:1791px;top:569.5px;width:35px;height:53.0px;overflow:hidden"><div class="t" style="left:0px;top:19.5px;font-size:13.2px;letter-spacing:0px;color:#2B2C33">Worksare</div></div><div class="abs" style="left:321px;top:662.0px;width:1505px;height:1px;background:#E4E5EA"></div><div class="abs" style="left:328px;top:636.0px;width:13px;height:13px;background:#fff;border:1.3px solid #6B73E8;border-radius:3px"></div><div class="t" style="left:441px;top:635.5px;font-size:13.2px;letter-spacing:0.32px;color:#2B2C33">P/1/2024/4/18</div><svg class="abs" style="left:592px;top:632.0px" width="20" height="17" viewBox="0 0 20 17"><rect x="0.5" y="0.5" width="19" height="13" rx="1.5" fill="#2B35D5" stroke="#A9ADF2" stroke-width="1"/><rect x="3" y="14.8" width="14" height="2" fill="#A9ADF2"/></svg><div class="t" style="left:618px;top:635.5px;font-size:13.2px;letter-spacing:0px;color:#2B2C33">Portal</div><div class="t" style="left:768px;top:635.5px;font-size:13.2px;letter-spacing:0px;color:#2B2C33">Administrator Oxari</div><div class="t" style="left:918px;top:635.5px;font-size:13.2px;letter-spacing:0px;color:#2B2C33">Problem</div><svg class="abs" style="left:1172px;top:630.5px" width="136" height="24" viewBox="0 0 136 24"><path d="M0 12 L5.5 0 H130.5 L136 12 L130.5 24 H5.5 Z" fill="#00897B"/></svg><div class="t" style="left:1172px;top:636.5px;width:136px;text-align:center;font-size:12px;font-weight:bold;color:#fff">New</div><div class="t" style="left:1322px;top:635.5px;font-size:13.2px;letter-spacing:0px;color:#2B2C33">-</div><div class="abs" style="left:1791px;top:622.5px;width:35px;height:40.0px;overflow:hidden"><div class="t" style="left:0px;top:13.0px;font-size:13.2px;letter-spacing:0px;color:#2B2C33">Probleare</div></div><div class="abs" style="left:321px;top:704.0px;width:1505px;height:1px;background:#E4E5EA"></div><div class="abs" style="left:328px;top:677.0px;width:13px;height:13px;background:#fff;border:1.3px solid #6B73E8;border-radius:3px"></div><div class="t" style="left:441px;top:676.5px;font-size:13.2px;letter-spacing:0.32px;color:#2B2C33">Incident/35/2024/4/15</div><svg class="abs" style="left:592px;top:673.0px" width="20" height="17" viewBox="0 0 20 17"><rect x="0.5" y="0.5" width="19" height="13" rx="1.5" fill="#2B35D5" stroke="#A9ADF2" stroke-width="1"/><rect x="3" y="14.8" width="14" height="2" fill="#A9ADF2"/></svg><div class="t" style="left:618px;top:676.5px;font-size:13.2px;letter-spacing:0px;color:#2B2C33">Portal</div><div class="t" style="left:768px;top:676.5px;font-size:13.2px;letter-spacing:0px;color:#2B2C33">Administrator Oxari</div><div class="t" style="left:918px;top:676.5px;font-size:13.2px;letter-spacing:0px;color:#2B2C33">Software failure - Outlook</div><svg class="abs" style="left:1172px;top:671.5px" width="136" height="24" viewBox="0 0 136 24"><path d="M0 12 L5.5 0 H130.5 L136 12 L130.5 24 H5.5 Z" fill="#00897B"/></svg><div class="t" style="left:1172px;top:677.5px;width:136px;text-align:center;font-size:12px;font-weight:bold;color:#fff">New</div><svg class="abs" style="left:1322px;top:671.5px" width="155" height="24" viewBox="0 0 155 24"><path d="M0 12 L5.5 0 H149.5 L155 12 L149.5 24 H5.5 Z" fill="#00897B"/></svg><div class="t" style="left:1322px;top:677.5px;width:155px;text-align:center;font-size:12px;font-weight:bold;color:#fff">Medium</div><div class="t" style="left:1641px;top:676.5px;font-size:13.2px;letter-spacing:0px;color:#2B2C33">Charlotte White</div><div class="abs" style="left:1791px;top:662.5px;width:35px;height:42.0px;overflow:hidden"><div class="t" style="left:0px;top:14.0px;font-size:13.2px;letter-spacing:0px;color:#2B2C33">Software</div></div><div class="abs" style="left:321px;top:757.0px;width:1505px;height:1px;background:#E4E5EA"></div><div class="abs" style="left:328px;top:724.5px;width:13px;height:13px;background:#fff;border:1.3px solid #6B73E8;border-radius:3px"></div><svg class="abs" style="left:370.5px;top:720.5px" width="16" height="17" viewBox="0 0 16 17"><circle cx="8" cy="4" r="3.6" fill="#DB3545"/><path d="M1 16.5 Q1 10 6 9.5 L8 12 L10 9.5 Q15 10 15 16.5Z" fill="#DB3545"/><path d="M7.3 10.5 h1.4 l0.4 5 h-2.2z" fill="#fff"/></svg><div class="t" style="left:441px;top:724.0px;font-size:13.2px;letter-spacing:0.32px;color:#2B2C33">Incident/34/2024/3/6</div><svg class="abs" style="left:592px;top:720.5px" width="20" height="17" viewBox="0 0 20 17"><rect x="0.5" y="0.5" width="19" height="13" rx="1.5" fill="#2B35D5" stroke="#A9ADF2" stroke-width="1"/><rect x="3" y="14.8" width="14" height="2" fill="#A9ADF2"/></svg><div class="t" style="left:618px;top:724.0px;font-size:13.2px;letter-spacing:0px;color:#2B2C33">Portal</div><div class="t" style="left:768px;top:724.0px;font-size:13.2px;letter-spacing:0px;color:#2B2C33">Logan Scott</div><div class="t" style="left:918px;top:724.0px;font-size:13.2px;letter-spacing:0px;color:#2B2C33">Hardware failure - Laptop</div><svg class="abs" style="left:1172px;top:719.0px" width="136" height="24" viewBox="0 0 136 24"><path d="M0 12 L5.5 0 H130.5 L136 12 L130.5 24 H5.5 Z" fill="#3D45CC"/></svg><div class="t" style="left:1172px;top:725.0px;width:136px;text-align:center;font-size:12px;font-weight:bold;color:#fff">Resumed</div><svg class="abs" style="left:1322px;top:719.0px" width="155" height="24" viewBox="0 0 155 24"><path d="M0 12 L5.5 0 H149.5 L155 12 L149.5 24 H5.5 Z" fill="#F0566B"/></svg><div class="t" style="left:1322px;top:725.0px;width:155px;text-align:center;font-size:12px;font-weight:bold;color:#fff">Critical</div><div class="t" style="left:1489px;top:714.0px;font-size:13.2px;color:#2B2C33">Hardware support</div><div class="t" style="left:1489px;top:734.0px;font-size:13.2px;color:#2B2C33">group</div><div class="t" style="left:1641px;top:724.0px;font-size:13.2px;letter-spacing:0px;color:#2B2C33">Administrator Oxari</div><div class="abs" style="left:1791px;top:704.5px;width:35px;height:53.0px;overflow:hidden"><div class="t" style="left:0px;top:19.5px;font-size:13.2px;letter-spacing:0px;color:#2B2C33">Worksare</div></div><div class="abs" style="left:321px;top:799.0px;width:1505px;height:1px;background:#E4E5EA"></div><div class="abs" style="left:328px;top:772.0px;width:13px;height:13px;background:#fff;border:1.3px solid #6B73E8;border-radius:3px"></div><div class="t" style="left:441px;top:771.5px;font-size:13.2px;letter-spacing:0.32px;color:#2B2C33">Incident/30/2024/2/15</div><svg class="abs" style="left:592px;top:768.0px" width="20" height="17" viewBox="0 0 20 17"><rect x="0.5" y="0.5" width="19" height="13" rx="1.5" fill="#2B35D5" stroke="#A9ADF2" stroke-width="1"/><rect x="3" y="14.8" width="14" height="2" fill="#A9ADF2"/></svg><div class="t" style="left:618px;top:771.5px;font-size:13.2px;letter-spacing:0px;color:#2B2C33">Portal</div><div class="t" style="left:768px;top:771.5px;font-size:13.2px;letter-spacing:0px;color:#2B2C33">Benjamin Anderson</div><div class="t" style="left:918px;top:771.5px;font-size:13.2px;letter-spacing:0px;color:#2B2C33">Software failure - 7-zip</div><svg class="abs" style="left:1172px;top:766.5px" width="136" height="24" viewBox="0 0 136 24"><path d="M0 12 L5.5 0 H130.5 L136 12 L130.5 24 H5.5 Z" fill="#00897B"/></svg><div class="t" style="left:1172px;top:772.5px;width:136px;text-align:center;font-size:12px;font-weight:bold;color:#fff">New</div><svg class="abs" style="left:1322px;top:766.5px" width="155" height="24" viewBox="0 0 155 24"><path d="M0 12 L5.5 0 H149.5 L155 12 L149.5 24 H5.5 Z" fill="#00897B"/></svg><div class="t" style="left:1322px;top:772.5px;width:155px;text-align:center;font-size:12px;font-weight:bold;color:#fff">Medium</div><div class="t" style="left:1641px;top:771.5px;font-size:13.2px;letter-spacing:0px;color:#2B2C33">Charlotte White</div><div class="abs" style="left:1791px;top:757.5px;width:35px;height:42.0px;overflow:hidden"><div class="t" style="left:0px;top:14.0px;font-size:13.2px;letter-spacing:0px;color:#2B2C33">Software</div></div><div class="abs" style="left:321px;top:852.0px;width:1505px;height:1px;background:#E4E5EA"></div><div class="abs" style="left:328px;top:819.5px;width:13px;height:13px;background:#fff;border:1.3px solid #6B73E8;border-radius:3px"></div><div class="t" style="left:441px;top:819.0px;font-size:13.2px;letter-spacing:0.32px;color:#2B2C33">Incident/29/2024/2/15</div><svg class="abs" style="left:592px;top:815.5px" width="20" height="17" viewBox="0 0 20 17"><rect x="0.5" y="0.5" width="19" height="13" rx="1.5" fill="#2B35D5" stroke="#A9ADF2" stroke-width="1"/><rect x="3" y="14.8" width="14" height="2" fill="#A9ADF2"/></svg><div class="t" style="left:618px;top:819.0px;font-size:13.2px;letter-spacing:0px;color:#2B2C33">Portal</div><div class="t" style="left:768px;top:819.0px;font-size:13.2px;letter-spacing:0px;color:#2B2C33">Benjamin Anderson</div><div class="t" style="left:918px;top:819.0px;font-size:13.2px;letter-spacing:0px;color:#2B2C33">Hardware failure - Laptop</div><svg class="abs" style="left:1172px;top:814.0px" width="136" height="24" viewBox="0 0 136 24"><path d="M0 12 L5.5 0 H130.5 L136 12 L130.5 24 H5.5 Z" fill="#00897B"/></svg><div class="t" style="left:1172px;top:820.0px;width:136px;text-align:center;font-size:12px;font-weight:bold;color:#fff">New</div><svg class="abs" style="left:1322px;top:814.0px" width="155" height="24" viewBox="0 0 155 24"><path d="M0 12 L5.5 0 H149.5 L155 12 L149.5 24 H5.5 Z" fill="#F0566B"/></svg><div class="t" style="left:1322px;top:820.0px;width:155px;text-align:center;font-size:12px;font-weight:bold;color:#fff">Critical</div><div class="t" style="left:1489px;top:809.0px;font-size:13.2px;color:#2B2C33">Hardware support</div><div class="t" style="left:1489px;top:829.0px;font-size:13.2px;color:#2B2C33">group</div><div class="abs" style="left:1791px;top:799.5px;width:35px;height:53.0px;overflow:hidden"><div class="t" style="left:0px;top:19.5px;font-size:13.2px;letter-spacing:0px;color:#2B2C33">Worksare</div></div><div class="abs" style="left:321px;top:905.0px;width:1505px;height:1px;background:#E4E5EA"></div><div class="abs" style="left:328px;top:872.5px;width:13px;height:13px;background:#fff;border:1.3px solid #6B73E8;border-radius:3px"></div><div class="t" style="left:441px;top:872.0px;font-size:13.2px;letter-spacing:0.32px;color:#2B2C33">Incident/28/2024/2/15</div><svg class="abs" style="left:592px;top:868.5px" width="20" height="17" viewBox="0 0 20 17"><rect x="0.5" y="0.5" width="19" height="13" rx="1.5" fill="#2B35D5" stroke="#A9ADF2" stroke-width="1"/><rect x="3" y="14.8" width="14" height="2" fill="#A9ADF2"/></svg><div class="t" style="left:618px;top:872.0px;font-size:13.2px;letter-spacing:0px;color:#2B2C33">Portal</div><div class="t" style="left:768px;top:872.0px;font-size:13.2px;letter-spacing:0px;color:#2B2C33">Benjamin Anderson</div><div class="t" style="left:918px;top:872.0px;font-size:13.2px;letter-spacing:0px;color:#2B2C33">Hardware failure - Monitor</div><svg class="abs" style="left:1172px;top:867.0px" width="136" height="24" viewBox="0 0 136 24"><path d="M0 12 L5.5 0 H130.5 L136 12 L130.5 24 H5.5 Z" fill="#2B35D5"/></svg><div class="t" style="left:1172px;top:873.0px;width:136px;text-align:center;font-size:12px;font-weight:bold;color:#fff">In progress</div><svg class="abs" style="left:1322px;top:867.0px" width="155" height="24" viewBox="0 0 155 24"><path d="M0 12 L5.5 0 H149.5 L155 12 L149.5 24 H5.5 Z" fill="#FFBC58"/></svg><div class="t" style="left:1322px;top:873.0px;width:155px;text-align:center;font-size:12px;font-weight:bold;color:#333">High</div><div class="t" style="left:1489px;top:862.0px;font-size:13.2px;color:#2B2C33">Hardware support</div><div class="t" style="left:1489px;top:882.0px;font-size:13.2px;color:#2B2C33">group</div><div class="abs" style="left:1791px;top:852.5px;width:35px;height:53.0px;overflow:hidden"><div class="t" style="left:0px;top:19.5px;font-size:13.2px;letter-spacing:0px;color:#2B2C33">Worksare</div></div><div class="abs" style="left:321px;top:947.0px;width:1505px;height:1px;background:#E4E5EA"></div><div class="abs" style="left:328px;top:920.0px;width:13px;height:13px;background:#fff;border:1.3px solid #6B73E8;border-radius:3px"></div><div class="t" style="left:441px;top:919.5px;font-size:13.2px;letter-spacing:0.32px;color:#2B2C33">Incident/27/2024/2/15</div><svg class="abs" style="left:592px;top:916.0px" width="20" height="17" viewBox="0 0 20 17"><rect x="0.5" y="0.5" width="19" height="13" rx="1.5" fill="#2B35D5" stroke="#A9ADF2" stroke-width="1"/><rect x="3" y="14.8" width="14" height="2" fill="#A9ADF2"/></svg><div class="t" style="left:618px;top:919.5px;font-size:13.2px;letter-spacing:0px;color:#2B2C33">Portal</div><div class="t" style="left:768px;top:919.5px;font-size:13.2px;letter-spacing:0px;color:#2B2C33">Benjamin Anderson</div><div class="t" style="left:918px;top:919.5px;font-size:13.2px;letter-spacing:0px;color:#2B2C33">Software failure - Excel</div><svg class="abs" style="left:1172px;top:914.5px" width="136" height="24" viewBox="0 0 136 24"><path d="M0 12 L5.5 0 H130.5 L136 12 L130.5 24 H5.5 Z" fill="#BCCCBE"/></svg><div class="t" style="left:1172px;top:920.5px;width:136px;text-align:center;font-size:12px;font-weight:bold;color:#333">Closed</div><svg class="abs" style="left:1322px;top:914.5px" width="155" height="24" viewBox="0 0 155 24"><path d="M0 12 L5.5 0 H149.5 L155 12 L149.5 24 H5.5 Z" fill="#BCCCBE"/></svg><div class="t" style="left:1322px;top:920.5px;width:155px;text-align:center;font-size:12px;font-weight:bold;color:#333">Low</div><div class="t" style="left:1641px;top:919.5px;font-size:13.2px;letter-spacing:0px;color:#2B2C33">Charlotte White</div><div class="abs" style="left:1791px;top:905.5px;width:35px;height:42.0px;overflow:hidden"><div class="t" style="left:0px;top:14.0px;font-size:13.2px;letter-spacing:0px;color:#2B2C33">Software</div></div><div class="abs" style="left:321px;top:989.0px;width:1505px;height:1px;background:#E4E5EA"></div><div class="abs" style="left:328px;top:962.0px;width:13px;height:13px;background:#fff;border:1.3px solid #6B73E8;border-radius:3px"></div><svg class="abs" style="left:370.5px;top:958.0px" width="16" height="17" viewBox="0 0 16 17"><circle cx="8" cy="4" r="3.6" fill="#1E8553"/><path d="M1 16.5 Q1 10 6 9.5 L8 12 L10 9.5 Q15 10 15 16.5Z" fill="#1E8553"/><path d="M7.3 10.5 h1.4 l0.4 5 h-2.2z" fill="#fff"/></svg><div class="t" style="left:441px;top:961.5px;font-size:13.2px;letter-spacing:0.32px;color:#2B2C33">Incident/26/2024/2/15</div><svg class="abs" style="left:592px;top:958.0px" width="20" height="17" viewBox="0 0 20 17"><rect x="0.5" y="0.5" width="19" height="13" rx="1.5" fill="#2B35D5" stroke="#A9ADF2" stroke-width="1"/><rect x="3" y="14.8" width="14" height="2" fill="#A9ADF2"/></svg><div class="t" style="left:618px;top:961.5px;font-size:13.2px;letter-spacing:0px;color:#2B2C33">Portal</div><div class="t" style="left:768px;top:961.5px;font-size:13.2px;letter-spacing:0px;color:#2B2C33">Benjamin Anderson</div><div class="t" style="left:918px;top:961.5px;font-size:13.2px;letter-spacing:0px;color:#2B2C33">Hardware failure - Laptop</div><svg class="abs" style="left:1172px;top:956.5px" width="136" height="24" viewBox="0 0 136 24"><path d="M0 12 L5.5 0 H130.5 L136 12 L130.5 24 H5.5 Z" fill="#2B35D5"/></svg><div class="t" style="left:1172px;top:962.5px;width:136px;text-align:center;font-size:12px;font-weight:bold;color:#fff">In progress</div><svg class="abs" style="left:1322px;top:956.5px" width="155" height="24" viewBox="0 0 155 24"><path d="M0 12 L5.5 0 H149.5 L155 12 L149.5 24 H5.5 Z" fill="#00897B"/></svg><div class="t" style="left:1322px;top:962.5px;width:155px;text-align:center;font-size:12px;font-weight:bold;color:#fff">Medium</div><div class="abs" style="left:1791px;top:947.5px;width:35px;height:42.0px;overflow:hidden"><div class="t" style="left:0px;top:14.0px;font-size:13.2px;letter-spacing:0px;color:#2B2C33">Worksare</div></div></div></div><div class="abs" style="left:341px;top:357px;width:59px;height:23px;background:#3A3A3A;color:#fff;font-size:12.5px;line-height:25px;text-align:center;white-space:nowrap;overflow:hidden">filter cell</div><div class="abs" style="left:1826px;top:383px;width:10px;height:583px;background:#E6EAFB"></div><svg class="abs" style="left:1827px;top:387px" width="8" height="6"><path d="M0 5 L4 1 L8 5Z" fill="#B4B9C5"/></svg><div class="abs" style="left:1828px;top:399px;width:6px;height:179px;background:#B4B9C5;border-radius:3px"></div><svg class="abs" style="left:1827px;top:950px" width="8" height="6"><path d="M0 1 L4 5 L8 1Z" fill="#B4B9C5"/></svg><div class="abs" style="left:321px;top:960px;width:1505px;height:10px;background:#E6EAFB"></div><div class="abs" style="left:336px;top:962px;width:925px;height:8px;background:#B4B9C5;border-radius:4px"></div><svg class="abs" style="left:323px;top:961px" width="6" height="8"><path d="M5 0 L1 4 L5 8Z" fill="#B4B9C5"/></svg><div class="abs" style="left:1857px;top:0;width:15px;height:966px;background:#F9F9F9"></div><svg class="abs" style="left:1860px;top:9px" width="10" height="7"><path d="M0 6 L5 1 L10 6Z" fill="#8C8C8C"/></svg><div class="abs" style="left:1860px;top:23px;width:9px;height:866px;background:#8C8C8C;border-radius:5px"></div><svg class="abs" style="left:1860px;top:951px" width="10" height="7"><path d="M0 1 L5 6 L10 1Z" fill="#8C8C8C"/></svg><svg class="abs" style="left:560px;top:120px" width="110" height="120" viewBox="560 120 110 120"><defs><filter id="sh" x="-30%" y="-30%" width="160%" height="160%"><feGaussianBlur in="SourceAlpha" stdDeviation="3"/><feOffset dx="3" dy="3"/><feComponentTransfer><feFuncA type="linear" slope="0.4"/></feComponentTransfer><feMerge><feMergeNode/><feMergeNode in="SourceGraphic"/></feMerge></filter></defs><path d="M574.5 227.5 L634.8 145.3 L630 143 L655 131 L647.6 158 L644.6 153.2 L576.3 227.9 Z" fill="#95D441" filter="url(#sh)"/></svg><div class="abs" style="left:-30px;top:-30px;width:1932px;height:1026px;border:30px solid #2A2A2A;border-radius:40px;pointer-events:none"></div></body></html>
